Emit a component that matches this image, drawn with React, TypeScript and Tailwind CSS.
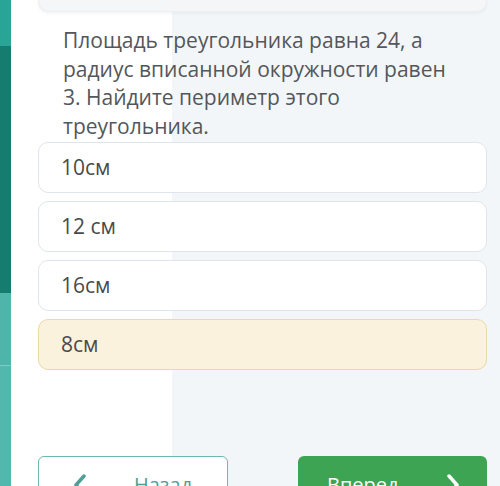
import React from "react";

const options = [
  { label: "10см", selected: false },
  { label: "12 см", selected: false },
  { label: "16см", selected: false },
  { label: "8см", selected: true },
];

export default function App() {
  return (
    <div
      className="flex w-[500px] h-[486px] overflow-hidden"
      style={{ fontFamily: '"Open Sans", "Noto Sans", sans-serif' }}
    >
      <div className="flex flex-col w-[11px] shrink-0">
        <div className="h-[46px] bg-[#29a597]" />
        <div className="h-[247px] bg-[#167c70]" />
        <div className="h-[73px] bg-[#4fb5aa] border-b border-[#7ccac1]" />
        <div className="flex-1 bg-[#52b7ac]" />
      </div>
      <div className="flex-1 flex flex-col pl-[27px] pr-[13px] bg-[linear-gradient(to_right,#ffffff_161px,#f3f6f8_161px)]">
        <div className="h-[12px] shrink-0 rounded-b-[10px] bg-[#f4f6f8] border-b border-x border-[#eceff2] shadow-[0_2px_3px_rgba(0,0,0,0.04)]" />
        <div className="pl-[25px] pt-[14px] w-[418px] text-[21px] leading-[28.5px] text-[#53575b]">
          Площадь треугольника равна 24, а радиус вписанной окружности равен 3. Найдите периметр этого треугольника.
        </div>
        <div className="flex flex-col gap-[8px] mt-[2px]">
          {options.map((o) => (
            <div
              key={o.label}
              className={
                o.selected
                  ? "h-[51px] flex items-center pl-[22px] rounded-[10px] border border-[#ebd9a8] bg-[#fbf2dd] text-[21px] text-[#4a4a4a]"
                  : "h-[51px] flex items-center pl-[22px] rounded-[10px] border border-[#dfe5ec] bg-white text-[21px] text-[#4a4a4a]"
              }
            >
              {o.label}
            </div>
          ))}
        </div>
        <div className="flex justify-between mt-[86px]">
          <div className="w-[190px] h-[58px] shrink-0 rounded-[6px] border-[1.5px] border-[#6fb8b1] bg-white flex items-center text-[20px] text-[#4f9e98]">
            <svg width="14" height="22" viewBox="0 0 14 22" className="ml-[34px]">
              <path d="M11 2 L3 11 L11 20" fill="none" stroke="#4f9e98" strokeWidth="3.5" strokeLinecap="round" strokeLinejoin="round" />
            </svg>
            <span className="ml-[47px]">Назад</span>
          </div>
          <div className="w-[189px] h-[58px] shrink-0 rounded-[6px] bg-[#3ca453] flex items-center text-[20px] text-white font-medium">
            <span className="ml-[29px]">Вперед</span>
            <svg width="14" height="22" viewBox="0 0 14 22" className="ml-[47px]">
              <path d="M3 2 L11 11 L3 20" fill="none" stroke="#ffffff" strokeWidth="3.5" strokeLinecap="round" strokeLinejoin="round" />
            </svg>
          </div>
        </div>
      </div>
    </div>
  );
}
